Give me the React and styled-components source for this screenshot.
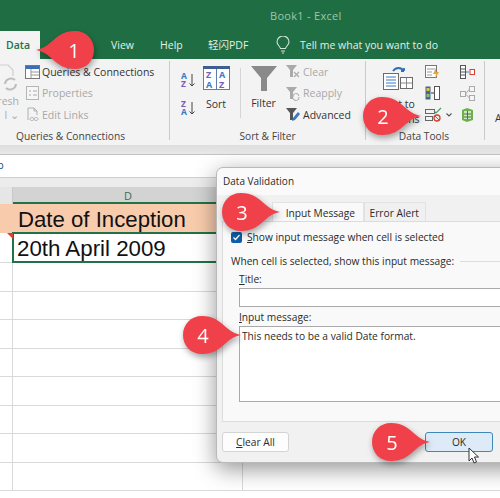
import React from "react";
import styled, { createGlobalStyle } from "styled-components";

const Global = createGlobalStyle`
  html, body { margin: 0; padding: 0; background: #fff; }
  body { font-family: "Open Sans", "Noto Sans", sans-serif; }
`;
const Page = styled.div`
  position: relative; width: 500px; height: 498px; overflow: hidden; background: #fff;
`;
const TitleBar = styled.header`
  height: 59px; background: #1f6e43; display: flex; flex-direction: column;
`;
const WindowTitle = styled.div`
  height: 31px; padding-left: 270px; line-height: 32px; font-size: 11px; color: #9cc7ad; letter-spacing: .3px; white-space: nowrap;
`;
const Tabs = styled.nav`
  height: 28px; display: flex; align-items: center; font-size: 10.5px; color: #e3efe8; white-space: nowrap;
`;
const RibbonTab = styled.div`
  width: ${p => p.$w}px; height: 28px; line-height: 28px; flex: none;
  padding-left: ${p => p.$pad || 0}px; box-sizing: border-box;
  ${p => p.$active && "background:#f3f3f3;color:#217346;font-weight:600;"}
`;
const BulbTab = styled(RibbonTab)`
  display: flex; align-items: center;
`;
const CjkTab = styled(RibbonTab)`
  font-family: "Open Sans", "Noto Sans CJK SC", sans-serif;
`;
const Ribbon = styled.section`
  height: 86px; background: #f3f3f3; display: flex; font-size: 10.5px; color: #333; box-sizing: border-box;
`;
const Group = styled.div`
  width: ${p => p.$w}px; flex: none; box-sizing: border-box; border-right: 1px solid #c9c9c9;
  margin: 2px 0 5px; display: flex; flex-direction: column;
`;
const GroupBody = styled.div`
  flex: 1; display: flex; min-height: 0; padding-left: ${p => p.$pad || 0}px;
`;
const GroupLabel = styled.div`
  height: 12px; line-height: 16px; text-align: center; font-size: 10.2px; color: #444; white-space: nowrap;
  padding-right: ${p => p.$shift || 0}px;
`;
const Stack = styled.div`
  display: flex; flex-direction: column; flex: none;
  width: ${p => p.$w ? p.$w + "px" : "auto"};
  padding-top: ${p => p.$top || 0}px; padding-left: ${p => p.$left || 0}px; gap: ${p => p.$gap || 0}px;
`;
const Line = styled.div`
  height: 21.5px; display: flex; align-items: center; gap: ${p => p.$gap ?? 2}px; white-space: nowrap; flex: none;
  color: ${p => p.$off ? "#a8a8a8" : "#333"};
`;
const Big = styled.div`
  width: ${p => p.$w}px; flex: none; display: flex; flex-direction: column; align-items: center; padding-top: ${p => p.$top || 5}px; white-space: nowrap;
`;
const BigText = styled.div`
  margin-top: ${p => p.$m || 7}px; line-height: 15px; color: #333; text-align: center;
`;
const Divider = styled.div`
  width: 1px; height: 50px; background: #d5d5d5; margin: 7px 0 0 7px; flex: none;
`;
const FadedCol = styled.div`
  width: 25px; flex: none; overflow: hidden; display: flex; flex-direction: column; align-items: flex-end;
  color: #aaa; line-height: 14px; padding: 3px 6px 0 0; box-sizing: border-box;
`;
const Strip = styled.div`
  height: 10px; background: linear-gradient(#dedede, #e8e8e8); border-bottom: 1px solid #c4c4c4; box-sizing: border-box;
`;
const FormulaBar = styled.div`
  height: 23px; background: #fff; border-bottom: 1px solid #d0d0d0; box-sizing: border-box; line-height: 20px; font-size: 11px; color: #16518a; margin-left: -3px;
`;
const Gap = styled.div`
  height: 9px; background: #ececec;
`;
const HeaderRow = styled.div`
  display: flex; height: 17px;
`;
const Corner = styled.div`
  width: 13px; background: #e6e6e6; border-right: 1px solid #c8c8c8; box-sizing: border-box;
`;
const ColHead = styled.div`
  width: 230px; background: #d3d3d3; border-bottom: 2px solid #217346; box-sizing: border-box; text-align: center; line-height: 17px; font-size: 11px; color: #3f6b55;
`;
const ColHeadRest = styled.div`
  flex: 1; background: #e6e6e6;
`;
const Row = styled.div`
  position: relative; display: flex; height: ${p => p.$h || 28.5}px; box-sizing: border-box;
  ${p => p.$peach ? "background:#f8cbad;" : "background:#fff;border-bottom:1px solid #d9d9d9;"}
`;
const CellA = styled.div`
  width: 13px; flex: none; box-sizing: border-box;
  border-right: ${p => p.$plain ? "none" : "1px solid #d9d9d9"};
`;
const CellD = styled.div`
  width: 230px; flex: none; box-sizing: border-box; border-right: 1px solid #d9d9d9;
  font-family: "Liberation Sans", Arial, sans-serif; font-size: 22.2px; color: #111; padding-left: 5px; white-space: nowrap; line-height: 31px;
`;
const ActiveCell = styled(CellD)`
  border: 2px solid #217346; width: 232px; margin-top: -1px; height: 31px; line-height: 29px; padding-left: 3px; margin-left: -1px; font-size: 22.300px;
`;
const Marker = styled.div`
  position: absolute; left: 7px; top: 0; width: 0; height: 0;
  border-top: 6px solid #d8402f; border-left: 6px solid transparent;
`;
const Dialog = styled.div`
  position: absolute; left: 216px; top: 167px; width: 320px; height: 296px; background: #f1f1f1;
  border: 1px solid #b9b9b9; border-radius: 7px; box-sizing: border-box; box-shadow: 0 6px 22px rgba(0,0,0,.42);
  display: flex; flex-direction: column; font-size: 10.2px; color: #2a2a2a;
`;
const DialogTitle = styled.div`
  height: 27px; background: #fafafa; border-radius: 7px 7px 0 0; padding-left: 6px; line-height: 26px; font-size: 10px;
`;
const DialogBody = styled.div`
  padding: 7px 0 0 5px; flex: 1; display: flex; flex-direction: column;
`;
const DTabs = styled.div`
  display: flex; padding-left: 50px; height: 19px;
`;
const DTab = styled.div`
  width: ${p => p.$w}px; box-sizing: border-box; line-height: 20px; text-align: right;
  padding-right: ${p => p.$w > 70 ? 8 : 6}px;
  background: ${p => p.$active ? "#f9f9f9" : "#f0f0f0"}; border: 1px solid #e2e2e2; border-bottom: none; font-weight: ${p => p.$active ? 400 : 500};
`;
const Panel = styled.div`
  height: 201px; background: #f9f9f9; border: 1px solid #dcdcdc; padding: 8px 0 0 8px; box-sizing: border-box; display: flex; flex-direction: column;
`;
const CheckRow = styled.label`
  display: flex; align-items: center; gap: 5px; height: 14px;
`;
const Check = styled.span`
  width: 11px; height: 11px; border-radius: 2px; background: #0f5ea8; display: flex; align-items: center; justify-content: center; flex: none;
`;
const Legend = styled.div`
  margin-top: 10px; display: flex; align-items: center; gap: 6px; height: 14px;
  &::after { content: ""; flex: 1; height: 1px; background: #dcdcdc; }
`;
const FieldLabel = styled.div`
  margin: ${p => p.$m || 4}px 0 0 8px; height: 13px; line-height: 13px;
`;
const Key = styled.span`
  text-decoration: underline;
`;
const TextBox = styled.div`
  margin: 2px 0 0 8px; height: ${p => p.$h}px; background: #fff; border: 1px solid #a9a9a9; box-sizing: border-box; padding: 2px 2px; line-height: 14px; flex: none;
`;
const DialogFoot = styled.div`
  display: flex; gap: 136px; padding-top: 10px;
`;
const DButton = styled.div`
  width: ${p => p.$w}px; height: 20px; box-sizing: border-box; border-radius: 3px; text-align: center; line-height: 18px; font-weight: 500;
  background: ${p => p.$primary ? "#dcebf7" : "#fdfdfd"}; border: ${p => p.$primary ? "1.5px solid #3f88ba" : "1px solid #d4d4d4"};
`;
const CalloutWrap = styled.div`
  position: absolute; left: ${p => p.$x}px; top: ${p => p.$y}px; width: 64px; height: 42px;
  filter: drop-shadow(1px 3px 3px rgba(0,0,0,.35));
`;
const CalloutShape = styled.svg`
  display: block; transform: ${p => p.$flip ? "scaleX(-1)" : "none"};
`;
const CalloutNum = styled.span`
  position: absolute; top: 0; width: 42px; height: 40px; display: flex; align-items: center; justify-content: center;
  color: #fff; font-size: 20px; font-family: "Open Sans", sans-serif; ${p => p.$flip ? "right:0;" : "left:0;"}
`;
const Pointer = styled.svg`
  position: absolute; left: 468px; top: 447px;
`;

const Callout = ({ x, y, n, flip }) => (
  <CalloutWrap $x={x} $y={y}>
    <CalloutShape $flip={flip} width="64" height="42" viewBox="0 0 64 42">
      <path d="M20 1 C31 1 36 5 45 13 C50 17 54 19 59 20 C54 21 49 23 44 28 C36 35 31 39 20 39 C9 39 1 31 1 20 C1 9 9 1 20 1Z" fill="#f0414a" />
    </CalloutShape>
    <CalloutNum $flip={flip}>{n}</CalloutNum>
  </CalloutWrap>
);

const IcoTable = () => (
  <svg width="15" height="14" viewBox="0 0 15 14"><rect x=".5" y=".5" width="14" height="13" fill="#fff" stroke="#777" /><rect x="1" y="1" width="13" height="3" fill="#3a6fb7" /><path d="M6 4v9M6 7h8M6 10h8" stroke="#999" /></svg>
);
const IcoProps = () => (
  <svg width="15" height="14" viewBox="0 0 15 14"><rect x="1.5" y=".5" width="12" height="13" fill="#f6f6f6" stroke="#b5b5b5" /><path d="M4 5h2M8 5h4M4 9h2M8 9h4" stroke="#aaa" /></svg>
);
const IcoLinks = () => (
  <svg width="15" height="15" viewBox="0 0 15 15" fill="none" stroke="#b0b0b0"><path d="M3 13V1h6l3 3v4M9 1v3h3" /><path d="M5 12c0-2 4-2 4 0s-4 2-4 0zM9 12c0-2 4-2 4 0s-4 2-4 0z" /></svg>
);
const IcoRefresh = () => (
  <svg width="19" height="30" viewBox="0 0 19 30" fill="none" stroke="#cfcfcf" strokeWidth="1.2"><path d="M-2 1h10l5 5v6" /><path d="M5 20a6 6 0 0 1 10-4M16 20a6 6 0 0 1-10 4" strokeWidth="2" stroke="#bdbdbd" /></svg>
);
const IcoAZ = ({ flip }) => (
  <svg width="15" height="16" viewBox="0 0 15 16">
    <text x="0" y="7" fontSize="8.5" fontWeight="700" fontFamily="Open Sans" fill={flip ? "#7b5cb8" : "#3a78c2"}>{flip ? "Z" : "A"}</text>
    <text x="0" y="15" fontSize="8.5" fontWeight="700" fontFamily="Open Sans" fill={flip ? "#3a78c2" : "#7b5cb8"}>{flip ? "A" : "Z"}</text>
    <path d="M11 2v12M8.500 11.500 11 14l2.500-2.500" stroke="#444" fill="none" />
  </svg>
);
const IcoSort = () => (
  <svg width="27" height="24" viewBox="0 0 27 24">
    <rect x=".5" y=".5" width="26" height="23" fill="#fff" stroke="#5f7fa8" /><rect x="0" y="0" width="27" height="3" fill="#3e5f8f" /><path d="M13.500 3v20" stroke="#5f7fa8" />
    <text x="3" y="12" fontSize="9" fontWeight="700" fontFamily="Open Sans" fill="#7b5cb8">Z</text><text x="3" y="21.500" fontSize="9" fontWeight="700" fontFamily="Open Sans" fill="#3a78c2">A</text>
    <text x="16" y="12" fontSize="9" fontWeight="700" fontFamily="Open Sans" fill="#3a78c2">A</text><text x="16" y="21.500" fontSize="9" fontWeight="700" fontFamily="Open Sans" fill="#7b5cb8">Z</text>
  </svg>
);
const IcoFunnel = ({ s = 26, c = "#8a8a8a" }) => (
  <svg width={s} height={s} viewBox="0 0 26 26"><path d="M0 1h26L16 13v13h-6V13z" fill={c} /></svg>
);
const IcoClear = ({ c, kind }) => (
  <svg width="15" height="15" viewBox="0 0 15 15">
    <path d="M0 1h11L7 6v7H4V6z" fill={c} />
    {kind === "x" && <path d="M8 8l5 5M13 8l-5 5" stroke={c} strokeWidth="1.2" />}
    {kind === "r" && <path d="M7 11a3 3 0 0 1 6-1M13 11a3 3 0 0 1-6 1" stroke={c} fill="none" />}
    {kind === "a" && <path d="M6 14l1-3 5-6 2 2-5 6z" fill="#3a78c2" />}
  </svg>
);
const IcoColumns = () => (
  <svg width="30" height="24" viewBox="0 0 30 24" fill="none">
    <path d="M10 5c3-4 8-4 11 0M21 5l-3 0M21 5l0-3" stroke="#2f6fb5" strokeWidth="1.8" />
    <rect x=".5" y="7.500" width="15" height="16" fill="#fff" stroke="#6b6b6b" /><path d="M3 11h10M3 14h10M3 17h10M3 20h10" stroke="#3a78c2" />
    <rect x="17.500" y="11.500" width="12" height="11" fill="#fff" stroke="#6b6b6b" /><path d="M23.500 12v10M18 17h11" stroke="#888" />
  </svg>
);
const IcoFlash = () => (
  <svg width="15" height="14" viewBox="0 0 15 14"><rect x=".5" y=".5" width="11" height="12" fill="#fff" stroke="#777" /><path d="M2 4h8M2 7h5M2 10h5" stroke="#999" /><path d="M11 3 8 9h3l-1 5 4-7h-3z" fill="#e8a33a" /></svg>
);
const IcoDupes = () => (
  <svg width="15" height="14" viewBox="0 0 15 14"><rect x=".5" y=".5" width="5" height="13" fill="#43679c" /><rect x="9.500" y=".5" width="5" height="13" fill="#fff" stroke="#555" /><rect x="1.500" y="2" width="3" height="3" fill="#e8c43a" /><rect x="1.500" y="8" width="3" height="3" fill="#8fbf5a" /><path d="M6 7h3" stroke="#333" /></svg>
);
const IcoValidate = () => (
  <svg width="17" height="15" viewBox="0 0 17 15" fill="none"><rect x=".5" y="2.500" width="9" height="4" stroke="#666" /><rect x=".5" y="9.500" width="7" height="4" stroke="#666" /><path d="M9 4l2 2 5-5" stroke="#4c9a6a" strokeWidth="1.2" /><circle cx="12" cy="11" r="3" stroke="#d8402f" strokeWidth="1.3" /><path d="M10 9l4 4" stroke="#d8402f" /></svg>
);
const IcoChevron = () => (
  <svg width="8" height="6" viewBox="0 0 8 6" fill="none" stroke="#555" strokeWidth="1.1"><path d="M1.500 1.500 4 4l2.500-2.500" /></svg>
);
const IcoConsol = () => (
  <svg width="15" height="14" viewBox="0 0 15 14"><rect x=".5" y=".5" width="5" height="13" fill="#fff" stroke="#555" /><path d="M1 4h4M1 7h4M1 10h4" stroke="#555" /><path d="M6 7h3" stroke="#3a78c2" /><rect x="10" y="4.500" width="4.500" height="5" fill="#fff" stroke="#d8402f" /></svg>
);
const IcoRel = () => (
  <svg width="15" height="15" viewBox="0 0 15 15" fill="#f6f6f6" stroke="#aaa"><rect x=".5" y="5.500" width="5" height="5" /><rect x="9.500" y=".5" width="5" height="5" /><rect x="9.500" y="9.500" width="5" height="5" /><path d="M5.500 8 9.500 3M5.500 8l4 4" fill="none" /></svg>
);
const IcoModel = () => (
  <svg width="15" height="16" viewBox="0 0 15 16"><path d="M2 3l5-2 6 2v10l-6 2-5-2z" fill="#6fb04e" /><rect x="4" y="4" width="7" height="8" fill="#cfe6bf" /><path d="M4 7h7M4 10h7M7.500 4v8" stroke="#3f7f2e" /></svg>
);
const IcoBulb = () => (
  <svg width="14" height="18" viewBox="0 0 14 18" fill="none" stroke="#cfe3d7" strokeWidth="1.1"><path d="M4.500 12.500C4 10 1 9 1 6a6 6 0 0 1 12 0c0 3-3 4-3.500 6.500z" /><path d="M5 15h4M6 17h2" /></svg>
);

const rowsBelow = [0, 1, 2, 3, 4, 5, 6, 7];

export default function App() {
  return (
    <Page>
      <Global />
      <TitleBar>
        <WindowTitle>Book1 - Excel</WindowTitle>
        <Tabs>
          <RibbonTab $w={40} $pad={6} $active>Data</RibbonTab>
          <RibbonTab $w={71} />
          <RibbonTab $w={49}>View</RibbonTab>
          <RibbonTab $w={48}>Help</RibbonTab>
          <CjkTab $w={68}>轻闪PDF</CjkTab>
          <BulbTab $w={24}><IcoBulb /></BulbTab>
          <RibbonTab $w={150}>Tell me what you want to do</RibbonTab>
        </Tabs>
      </TitleBar>
      <Ribbon>
        <Group $w={170}>
          <GroupBody>
            <FadedCol>
              <IcoRefresh />
              <span>resh</span>
              <span>l ⌄</span>
            </FadedCol>
            <Stack>
              <Line><IcoTable />Queries &amp; Connections</Line>
              <Line $off><IcoProps />Properties</Line>
              <Line $off><IcoLinks />Edit Links</Line>
            </Stack>
          </GroupBody>
          <GroupLabel $shift={28}>Queries &amp; Connections</GroupLabel>
        </Group>
        <Group $w={196}>
          <GroupBody $pad={11}>
            <Stack $w={18} $top={11} $gap={12}>
              <IcoAZ />
              <IcoAZ flip />
            </Stack>
            <Big $w={34}><IcoSort /><BigText>Sort</BigText></Big>
            <Divider />
            <Big $w={45} $top={4}><IcoFunnel /><BigText $m={5}>Filter</BigText></Big>
            <Stack>
              <Line $off><IcoClear c="#aaa" kind="x" />Clear</Line>
              <Line $off><IcoClear c="#aaa" kind="r" />Reapply</Line>
              <Line><IcoClear c="#555" kind="a" />Advanced</Line>
            </Stack>
          </GroupBody>
          <GroupLabel>Sort &amp; Filter</GroupLabel>
        </Group>
        <Group $w={119}>
          <GroupBody $pad={17}>
            <Big $w={30}><IcoColumns /><BigText>Text to<br />Columns</BigText></Big>
            <Stack $w={35} $left={12}>
              <Line><IcoFlash /></Line>
              <Line><IcoDupes /></Line>
              <Line $gap={3}><IcoValidate /><IcoChevron /></Line>
            </Stack>
            <Stack>
              <Line><IcoConsol /></Line>
              <Line><IcoRel /></Line>
              <Line><IcoModel /></Line>
            </Stack>
          </GroupBody>
          <GroupLabel $shift={2}>Data Tools</GroupLabel>
        </Group>
        <Stack $top={52} $left={10}>A</Stack>
      </Ribbon>
      <Strip />
      <FormulaBar>p</FormulaBar>
      <Gap />
      <HeaderRow><Corner /><ColHead>D</ColHead><ColHeadRest /></HeaderRow>
      <Row $peach $h={29}><CellA $plain /><CellD>Date of Inception</CellD></Row>
      <Row $h={30}><Marker /><CellA /><ActiveCell>20th April 2009</ActiveCell></Row>
      {rowsBelow.map(i => <Row key={i}><CellA /><CellD /></Row>)}
      <Dialog>
        <DialogTitle>Data Validation</DialogTitle>
        <DialogBody>
          <DTabs>
            <DTab $w={92} $active>Input Message</DTab>
            <DTab $w={62}>Error Alert</DTab>
          </DTabs>
          <Panel>
            <CheckRow>
              <Check><svg width="9" height="9" viewBox="0 0 9 9" fill="none" stroke="#fff" strokeWidth="1.3"><path d="M1.500 4.500l2 2 4-4.500" /></svg></Check>
              <span><Key>S</Key>how input message when cell is selected</span>
            </CheckRow>
            <Legend>When cell is selected, show this input message:</Legend>
            <FieldLabel $m={5}><Key>T</Key>itle:</FieldLabel>
            <TextBox $h={19} />
            <FieldLabel $m={4}><Key>I</Key>nput message:</FieldLabel>
            <TextBox $h={76}>This needs to be a valid Date format.</TextBox>
          </Panel>
          <DialogFoot>
            <DButton $w={67}><Key>C</Key>lear All</DButton>
            <DButton $w={68} $primary>OK</DButton>
          </DialogFoot>
        </DialogBody>
      </Dialog>
      <Callout x={31} y={30} n="1" flip />
      <Callout x={362} y={96} n="2" />
      <Callout x={221} y={192} n="3" />
      <Callout x={182} y={315} n="4" />
      <Callout x={371} y={422} n="5" />
      <Pointer width="12" height="18" viewBox="0 0 12 18"><path d="M1 1v13l3-3 2 5 2.500-1-2-5h4z" fill="#fff" stroke="#333" /></Pointer>
    </Page>
  );
}
